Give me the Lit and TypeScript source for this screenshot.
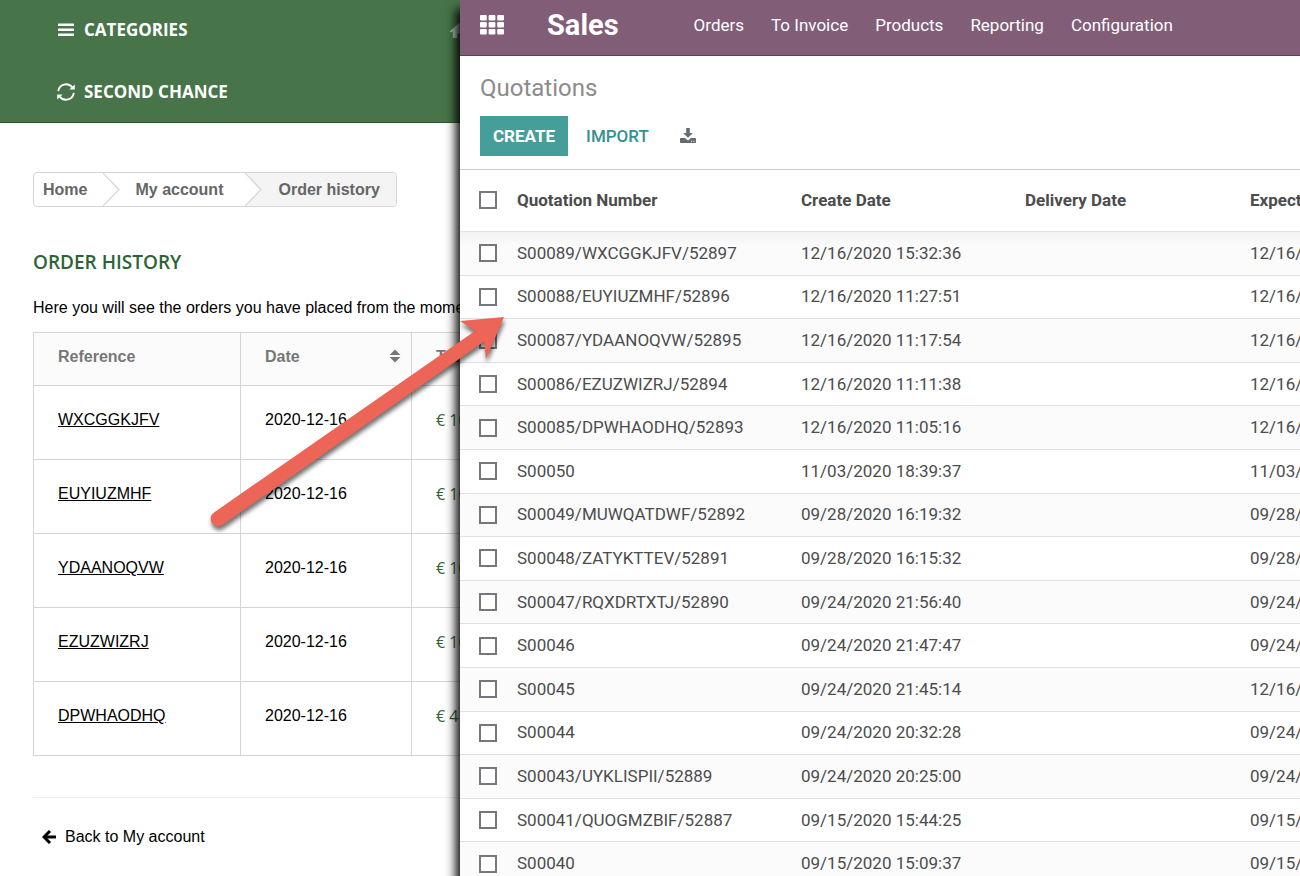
import { LitElement, html, css, svg } from "lit";
import { customElement, property } from "lit/decorators.js";

interface Order {
  reference: string;
  date: string;
  total: string;
}

interface Quotation {
  number: string;
  created: string;
  expected: string;
}

const ORDERS: Order[] = [
  { reference: "WXCGGKJFV", date: "2020-12-16", total: "€ 10" },
  { reference: "EUYIUZMHF", date: "2020-12-16", total: "€ 10" },
  { reference: "YDAANOQVW", date: "2020-12-16", total: "€ 10" },
  { reference: "EZUZWIZRJ", date: "2020-12-16", total: "€ 10" },
  { reference: "DPWHAODHQ", date: "2020-12-16", total: "€ 4" },
];

const QUOTATIONS: Quotation[] = [
  { number: "S00089/WXCGGKJFV/52897", created: "12/16/2020 15:32:36", expected: "12/16/2020" },
  { number: "S00088/EUYIUZMHF/52896", created: "12/16/2020 11:27:51", expected: "12/16/2020" },
  { number: "S00087/YDAANOQVW/52895", created: "12/16/2020 11:17:54", expected: "12/16/2020" },
  { number: "S00086/EZUZWIZRJ/52894", created: "12/16/2020 11:11:38", expected: "12/16/2020" },
  { number: "S00085/DPWHAODHQ/52893", created: "12/16/2020 11:05:16", expected: "12/16/2020" },
  { number: "S00050", created: "11/03/2020 18:39:37", expected: "11/03/2020" },
  { number: "S00049/MUWQATDWF/52892", created: "09/28/2020 16:19:32", expected: "09/28/2020" },
  { number: "S00048/ZATYKTTEV/52891", created: "09/28/2020 16:15:32", expected: "09/28/2020" },
  { number: "S00047/RQXDRTXTJ/52890", created: "09/24/2020 21:56:40", expected: "09/24/2020" },
  { number: "S00046", created: "09/24/2020 21:47:47", expected: "09/24/2020" },
  { number: "S00045", created: "09/24/2020 21:45:14", expected: "12/16/2020" },
  { number: "S00044", created: "09/24/2020 20:32:28", expected: "09/24/2020" },
  { number: "S00043/UYKLISPII/52889", created: "09/24/2020 20:25:00", expected: "09/24/2020" },
  { number: "S00041/QUOGMZBIF/52887", created: "09/15/2020 15:44:25", expected: "09/15/2020" },
  { number: "S00040", created: "09/15/2020 15:09:37", expected: "09/15/2020" },
];

@customElement("shop-panel")
export class ShopPanel extends LitElement {
  @property({ attribute: false }) orders: Order[] = [];

  static styles = css`
    :host {
      display: block;
      overflow: hidden;
      background: #fff;
      color: #000;
      font: 16px/20px "Liberation Sans", Arial, sans-serif;
      white-space: nowrap;
    }
    a {
      color: inherit;
    }
    .bar {
      display: flex;
      align-items: center;
      height: 122px;
      background: #477549;
      border-bottom: 1px solid #2b5c30;
      padding-left: 57px;
      color: #fff;
    }
    .menu {
      flex: 0 0 392px;
    }
    .menu-link {
      display: flex;
      align-items: center;
      gap: 9px;
      height: 62px;
      font: 700 17px/24px "Open Sans", sans-serif;
      text-decoration: none;
    }
    .home {
      display: flex;
      align-items: center;
      align-self: flex-start;
      height: 62px;
      color: #b9c4ba;
    }
    .content {
      padding: 49px 0 0 33px;
    }
    .crumbs {
      display: inline-flex;
      height: 33px;
      margin: 0;
      padding: 0;
      list-style: none;
      border: 1px solid #d6d4d4;
      border-radius: 4px;
      overflow: hidden;
      font-weight: 700;
      line-height: 33px;
      color: #666;
    }
    .crumb {
      display: flex;
    }
    .crumb a {
      padding: 0 16px 0 9px;
      text-decoration: none;
    }
    .crumb + .crumb a {
      padding: 0 22px 0 15px;
    }
    .crumb + .crumb.current {
      background: #f4f4f4;
      padding-right: 16px;
    }
    .current span {
      padding-left: 16px;
    }
    .title {
      margin: 43px 0 24px;
      font: 600 19px/24px "Open Sans", sans-serif;
      color: #2d6435;
    }
    .intro {
      margin: 0 0 14px;
    }
    .orders {
      width: 480px;
      table-layout: fixed;
      border-collapse: collapse;
    }
    .orders th,
    .orders td {
      box-sizing: border-box;
      border: 1px solid #d6d4d4;
      text-align: left;
      vertical-align: top;
    }
    .orders th {
      padding: 14px 10px 18px 24px;
      background: #fbfbfb;
      color: #777;
    }
    .orders td {
      padding: 24px 24px 29px;
    }
    .orders .total {
      color: #2d6435;
      font-family: "Open Sans", sans-serif;
    }
    .orders .reference {
      width: 207px;
    }
    .orders .date {
      width: 171px;
    }
    .sortable {
      display: flex;
      justify-content: space-between;
    }
    .footer {
      margin-top: 41px;
      border-top: 1px solid #eee;
      padding: 29px 9px;
    }
    .back {
      display: inline-flex;
      align-items: center;
      gap: 9px;
      text-decoration: none;
    }
  `;

  private chevron(fill: string) {
    return html`<svg width="17" height="33" viewBox="0 0 17 33" aria-hidden="true">
      <rect width="17" height="33" fill=${fill} />
      <path d="M0 0L16 16.5L0 33" fill="#fff" stroke="#d6d4d4" stroke-width="1.2" />
    </svg>`;
  }

  render() {
    return html`
      <header class="bar">
        <nav class="menu">
          <a class="menu-link" href="#categories">
            <svg width="18" height="18" viewBox="0 0 18 18" fill="currentColor" aria-hidden="true">
              <rect x="1" y="2.5" width="16" height="2.6" rx=".6" />
              <rect x="1" y="7.5" width="16" height="2.6" rx=".6" />
              <rect x="1" y="12.5" width="16" height="2.6" rx=".6" />
            </svg>
            CATEGORIES
          </a>
          <a class="menu-link" href="#second-chance">
            <svg width="18" height="18" viewBox="0 0 18 18" fill="none" stroke="currentColor" stroke-width="1.9" aria-hidden="true">
              <path d="M1.2 8.2A7.9 7.9 0 0 1 15.3 4.4" />
              <path d="M16.8 9.8A7.9 7.9 0 0 1 2.7 13.6" />
              <path d="M17.8 1.4V6.6H12.4Z" fill="currentColor" stroke="none" />
              <path d="M.2 16.6V11.4H5.6Z" fill="currentColor" stroke="none" />
            </svg>
            SECOND CHANCE
          </a>
        </nav>
        <a class="home" href="#home" aria-label="Home page">
          <svg width="20" height="18" viewBox="0 0 20 18" fill="currentColor" aria-hidden="true">
            <path d="M10 1L.8 9.4L2 10.4L3.8 9V16H8.2V11.4H11.8V16H16.2V9L18 10.4L19.2 9.4Z" />
          </svg>
        </a>
      </header>
      <div class="content">
        <ol class="crumbs">
          <li class="crumb"><a href="#home">Home</a>${this.chevron("#fff")}</li>
          <li class="crumb"><a href="#account">My account</a>${this.chevron("#f4f4f4")}</li>
          <li class="crumb current"><span>Order history</span></li>
        </ol>
        <h1 class="title">ORDER HISTORY</h1>
        <p class="intro">Here you will see the orders you have placed from the moment</p>
        <table class="orders">
          <thead>
            <tr>
              <th class="reference">Reference</th>
              <th class="date">
                <div class="sortable">
                  Date
                  <svg width="12" height="18" viewBox="0 0 12 18" fill="#777" aria-hidden="true">
                    <path d="M6 2.4L11.4 8H.6ZM6 15.6L11.4 10H.6Z" />
                  </svg>
                </div>
              </th>
              <th>Total price</th>
            </tr>
          </thead>
          <tbody>
            ${this.orders.map(
              (o) => html`<tr>
                <td><a href="#${o.reference}">${o.reference}</a></td>
                <td>${o.date}</td>
                <td class="total">${o.total}</td>
              </tr>`,
            )}
          </tbody>
        </table>
        <div class="footer">
          <a class="back" href="#account">
            <svg width="14" height="14" viewBox="0 0 14 14" fill="none" stroke="currentColor" aria-hidden="true">
              <path d="M14 7H2.5" stroke-width="3" />
              <path d="M8 1L2 7L8 13" stroke-width="3" />
            </svg>
            Back to My account
          </a>
        </div>
      </div>
    `;
  }
}

@customElement("sales-panel")
export class SalesPanel extends LitElement {
  @property({ attribute: false }) quotations: Quotation[] = [];

  static styles = css`
    :host {
      display: block;
      position: relative;
      background: #fff;
      color: #4c4c4c;
      font: 17px/20px Roboto, sans-serif;
      white-space: nowrap;
      box-shadow: -3px 10px 10px 1px #000;
    }
    .inner {
      height: 100%;
      overflow: hidden;
    }
    .nav {
      display: flex;
      align-items: center;
      height: 50px;
      padding: 0 20px 5px;
      border-bottom: 1px solid #5f4059;
      background: #815d78;
      color: #fff;
    }
    .nav a {
      color: inherit;
      text-decoration: none;
    }
    .apps {
      display: flex;
      border: 0;
      padding: 0;
      background: none;
      color: inherit;
    }
    .brand {
      margin: 0 75px 0 43px;
      font-size: 29px;
      font-weight: 700;
      line-height: 34px;
    }
    .links {
      display: flex;
      gap: 27px;
    }
    .control {
      padding: 17px 20px 13px;
      border-bottom: 1px solid #ccc;
    }
    .heading {
      margin: 0 0 13px;
      font-size: 24px;
      font-weight: 400;
      line-height: 30px;
      color: #8c8c8c;
    }
    .actions {
      display: flex;
      align-items: center;
    }
    .button {
      display: flex;
      align-items: center;
      height: 40px;
      border: 0;
      padding: 0 13px;
      background: none;
      color: #666b70;
      font: 500 17px/20px Roboto, sans-serif;
    }
    .primary {
      background: #469e9a;
      color: #fff;
      font-weight: 700;
    }
    .secondary {
      padding: 0 18px;
      color: #35918c;
    }
    .list {
      width: 1100px;
      height: 716px;
      table-layout: fixed;
      border-collapse: collapse;
    }
    .list th,
    .list td {
      padding: 0 0 1px;
      text-align: left;
      border-bottom: 1px solid #dee2e6;
    }
    .list th {
      height: 59px;
      padding-bottom: 2px;
      font-weight: 700;
    }
    .list td {
      height: 41px;
    }
    .list tbody tr:nth-child(odd) {
      background: #fbfbfc;
    }
    .list tbody tr:first-child {
      background: linear-gradient(#f3f3f4, #fbfbfc 14px);
    }
    .list .pick {
      width: 38px;
      padding-left: 19px;
    }
    .number {
      width: 284px;
    }
    .created {
      width: 224px;
    }
    .delivery {
      width: 225px;
    }
    .tick {
      display: block;
      appearance: none;
      width: 18px;
      height: 18px;
      margin: 1px 0 0;
      border: 2px solid #75777c;
      background: #fff;
    }
  `;

  render() {
    const cells = [0, 1, 2];
    return html`
      <div class="inner">
        <header class="nav">
          <button class="apps" aria-label="Applications">
            <svg width="24" height="20" viewBox="0 0 24 20" fill="currentColor" aria-hidden="true">
              ${cells.map((r) =>
                cells.map((c) => svg`<rect x=${c * 8.6} y=${r * 7} width="6.8" height="5.6" rx="1" />`),
              )}
            </svg>
          </button>
          <a class="brand" href="#sales">Sales</a>
          <nav class="links">
            ${["Orders", "To Invoice", "Products", "Reporting", "Configuration"].map(
              (label) => html`<a href="#${label}">${label}</a>`,
            )}
          </nav>
        </header>
        <section class="control">
          <h2 class="heading">Quotations</h2>
          <div class="actions">
            <button class="button primary">CREATE</button>
            <button class="button secondary">IMPORT</button>
            <button class="button" aria-label="Export">
              <svg width="16" height="16" viewBox="0 0 16 16" fill="currentColor" aria-hidden="true">
                <path d="M6.2 0H9.8V5H12.8L8 9.8L3.2 5H6.2Z" />
                <path fill-rule="evenodd" d="M.8 10H5L8 12.4L11 10H15.2Q16 10 16 10.8V14.2Q16 15 15.2 15H.8Q0 15 0 14.2V10.8Q0 10 .8 10ZM11 12.8V13.8H12V12.8ZM13.4 12.8V13.8H14.4V12.8Z" />
              </svg>
            </button>
          </div>
        </section>
        <table class="list">
          <thead>
            <tr>
              <th class="pick"><input class="tick" type="checkbox" aria-label="Select all" /></th>
              <th class="number">Quotation Number</th>
              <th class="created">Create Date</th>
              <th class="delivery">Delivery Date</th>
              <th>Expected Date</th>
            </tr>
          </thead>
          <tbody>
            ${this.quotations.map(
              (q) => html`<tr>
                <td class="pick"><input class="tick" type="checkbox" aria-label="Select ${q.number}" /></td>
                <td>${q.number}</td>
                <td>${q.created}</td>
                <td></td>
                <td>${q.expected}</td>
              </tr>`,
            )}
          </tbody>
        </table>
      </div>
    `;
  }
}

@customElement("app-root")
export class AppRoot extends LitElement {
  static styles = css`
    :host {
      display: grid;
      grid-template-columns: minmax(0, 23fr) minmax(0, 42fr);
      position: relative;
      height: 100vh;
      overflow: hidden;
    }
    .arrow {
      position: absolute;
      left: 200px;
      top: 300px;
      pointer-events: none;
      filter: drop-shadow(1px 4px 2px rgba(0, 0, 0, 0.55));
    }
  `;

  render() {
    return html`
      <shop-panel .orders=${ORDERS}></shop-panel>
      <sales-panel .quotations=${QUOTATIONS}></sales-panel>
      <svg class="arrow" width="320" height="240" viewBox="200 300 320 240" aria-hidden="true">
        <path
          d="M504 317L460 321L475 331L214 512.4A7.4 7.4 0 0 0 222.4 525L484 341.5L486 359Z"
          fill="#ec6556"
        />
      </svg>
    `;
  }
}
